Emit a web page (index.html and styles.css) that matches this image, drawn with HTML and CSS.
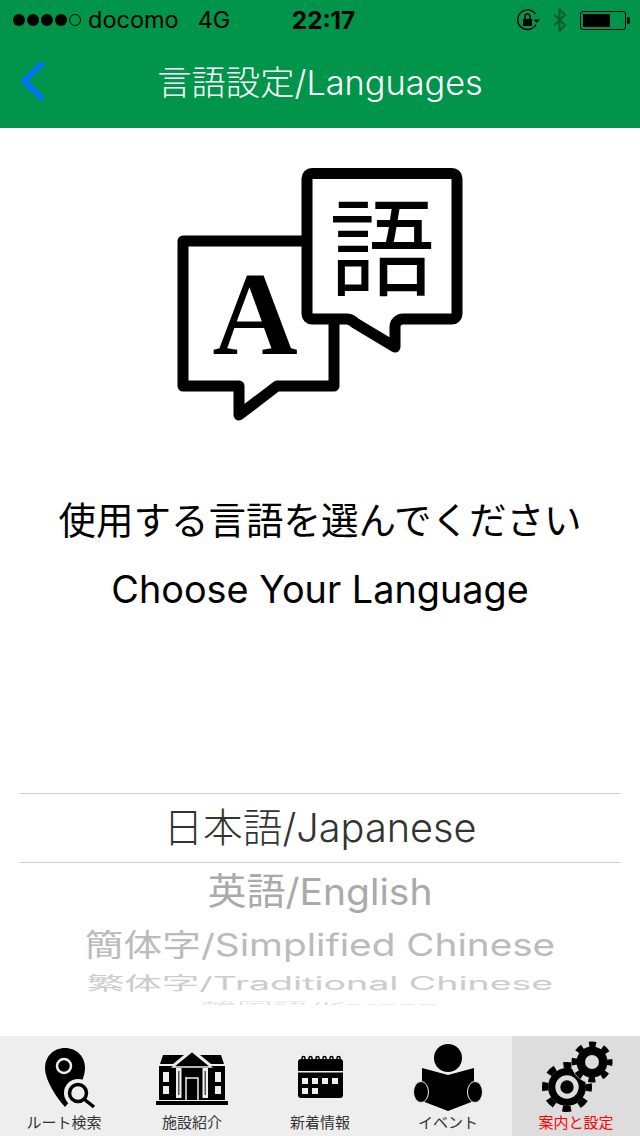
FILE: index.html
```html
<!DOCTYPE html>
<html lang="ja">
<head>
    <meta charset="UTF-8">
    <title>言語設定/Languages</title>
    <link rel="stylesheet" href="styles.css">
</head>
<body>
<div id="site">
    <header class="top">
        <div class="status">
            <div class="status-left">
                <span class="signal"><i></i><i></i><i></i><i></i><i class="off"></i></span>
                <span class="carrier">docomo</span>
                <span class="network">4G</span>
            </div>
            <div class="clock">22:17</div>
            <div class="status-right">
                <svg class="lock" width="24" height="24" viewBox="0 0 24 24">
                    <path d="M19 16.500A9.800 9.800 0 1 1 18.500 6" fill="none" stroke="#000" stroke-width="1.400"/>
                    <path d="M16.500 11.500h6.500l-3.200 3.500z" fill="#000"/>
                    <rect x="6" y="11" width="9" height="7" fill="#000"/>
                    <path d="M8 11V8.500a2.500 2.500 0 0 1 5 0V11" fill="none" stroke="#000" stroke-width="1.500"/>
                </svg>
                <svg class="bt" width="16" height="24" viewBox="0 0 16 24">
                    <path d="M2 6.500l11 10.500-5.500 6V1l5.500 6L2 17.500" fill="none" stroke="#0b5c32" stroke-width="2.200"/>
                </svg>
                <div class="battery"><div class="battery-fill"></div></div>
            </div>
        </div>
        <div class="nav">
            <svg class="back" width="28" height="42" viewBox="0 0 28 42">
                <path d="M24 3L5 21l19 18" fill="none" stroke="#0073ff" stroke-width="5.500"/>
            </svg>
            <h1 class="title">言語設定/Languages</h1>
        </div>
    </header>

    <main class="content">
        <svg class="lang-icon" width="286" height="254" viewBox="0 0 286 254">
            <path d="M130 73H6V218H62V247L100 218H157V150" fill="#fff" stroke="#000" stroke-width="11" stroke-linejoin="round"/>
            <path d="M135 5.500H275a5 5 0 0 1 5 5V146a5 5 0 0 1-5 5H226a8 8 0 0 0-8 8V179L178 155a12 12 0 0 0-8-4H135a5 5 0 0 1-5-5V10.500a5 5 0 0 1 5-5z" fill="#fff" stroke="#000" stroke-width="11" stroke-linejoin="round"/>
            <text class="icon-a" x="78" y="186" text-anchor="middle">A</text>
            <text class="icon-go" x="205" y="119" text-anchor="middle">語</text>
        </svg>
        <p class="prompt">使用する言語を選んでください</p>
        <p class="prompt en">Choose Your Language</p>
    </main>

    <section class="picker">
        <div class="row selected">日本語/Japanese</div>
        <div class="row r1">英語/English</div>
        <div class="row r2">簡体字/Simplified Chinese</div>
        <div class="row r3">繁体字/Traditional Chinese</div>
        <div class="row r4">韓国語/Korean</div>
    </section>

    <nav class="tabs">
        <div class="tab">
            <svg width="70" height="70" viewBox="0 0 70 70">
                <path d="M36 6C24 6 16 15 16 26c0 12 11 29 20 39 9-10 20-27 20-39C56 15 48 6 36 6z" fill="#000"/>
                <circle cx="35" cy="24" r="7" fill="#000" stroke="#eee" stroke-width="2.500"/>
                <circle cx="49" cy="51" r="14" fill="#eee"/>
                <circle cx="49" cy="51" r="8.500" fill="none" stroke="#000" stroke-width="3.500"/>
                <path d="M55.500 57.500L65 65" stroke="#000" stroke-width="3.500"/>
            </svg>
            <span>ルート検索</span>
        </div>
        <div class="tab">
            <svg class="building" width="72" height="60" viewBox="0 0 72 60">
                <path d="M4 18L7 9H28L17 18z M68 18L65 9H44L55 18z" fill="#000"/>
                <path d="M3 20H69V54H3z" fill="#000"/>
                <path d="M36 5.500L55 21H17z" fill="#000" stroke="#eee" stroke-width="1.500"/>
                <path d="M20 22h5.500v30H20z M46.500 22H52v30h-5.500z" fill="#eee"/>
                <path d="M22 25h1.500v24H22z M48.500 25H50v24h-1.500z" fill="#555"/>
                <path d="M30 32H42V54" fill="none" stroke="#eee" stroke-width="1.500"/>
                <path d="M30 31v23" stroke="#eee" stroke-width="1.500"/>
                <path d="M7 26h6v10H7z M7 40h6v8H7z M59 26h6v10h-6z M59 40h6v8h-6z" fill="#eee"/>
                <path d="M0 55H72V59H0z" fill="#000"/>
            </svg>
            <span>施設紹介</span>
        </div>
        <div class="tab">
            <svg width="48" height="60" viewBox="0 0 48 60">
                <path d="M2 20V29H47V20a3 3 0 0 0-3-3H5a3 3 0 0 0-3 3z" fill="#000"/>
                <path d="M2 30.500H47V53a3 3 0 0 1-3 3H5a3 3 0 0 1-3-3z" fill="#000"/>
                <path d="M6 20v-4a1.500 1.500 0 0 1 3 0v4 M13 20v-4a1.500 1.500 0 0 1 3 0v4 M20 20v-4a1.500 1.500 0 0 1 3 0v4 M27 20v-4a1.500 1.500 0 0 1 3 0v4 M34 20v-4a1.500 1.500 0 0 1 3 0v4 M41 20v-4a1.500 1.500 0 0 1 3 0v4" fill="none" stroke="#000" stroke-width="1.500"/>
                <path d="M6 36h6v6H6z M16 36h6v6h-6z M26 36h6v6h-6z M36 36h6v6h-6z M6 46h6v6H6z M16 46h6v6h-6z" fill="#eee"/>
            </svg>
            <span>新着情報</span>
        </div>
        <div class="tab">
            <svg width="70" height="70" viewBox="0 0 70 70">
                <circle cx="35" cy="16" r="14" fill="#000"/>
                <path d="M9 26L35 33 61 26V59L35 69 9 59z" fill="#000"/>
                <ellipse cx="8" cy="50" rx="7.500" ry="10.500" fill="#000" stroke="#eee" stroke-width="1"/>
                <ellipse cx="62" cy="50" rx="7.500" ry="10.500" fill="#000" stroke="#eee" stroke-width="1"/>
            </svg>
            <span>イベント</span>
        </div>
        <div class="tab active">
            <svg width="76" height="78" viewBox="0 0 76 78">
                <circle cx="29" cy="49" r="19" fill="#000"/>
                <circle cx="29" cy="49" r="22" fill="none" stroke="#000" stroke-width="6" stroke-dasharray="8.640 8.640" stroke-dashoffset="4.320"/>
                <circle cx="29" cy="49" r="9.200" fill="#000" stroke="#ddd" stroke-width="5"/>
                <circle cx="54" cy="24" r="21" fill="#ddd"/>
                <circle cx="54" cy="24" r="15.500" fill="#000"/>
                <circle cx="54" cy="24" r="17.750" fill="none" stroke="#000" stroke-width="5.500" stroke-dasharray="6.970 6.970" stroke-dashoffset="3.480"/>
                <circle cx="54" cy="24" r="7" fill="#ddd"/>
            </svg>
            <span>案内と設定</span>
        </div>
    </nav>
</div>
</body>
</html>
```

FILE: styles.css
```css
body, html, #site {
    margin: 0;
    padding: 0;
    height: 100%;
    overflow: hidden;
}

#site {
    display: flex;
    flex-direction: column;
    background: #fff;
    font-family: Inter, "Noto Sans CJK JP", sans-serif;
    color: #000;
}

.top {
    height: 128px;
    background: #00954a;
    flex: none;
}

.status {
    height: 40px;
    padding: 0 14px 0 13px;
    display: grid;
    grid-template-columns: 1fr auto 1fr;
    align-items: center;
    font-size: 23.500px;
    line-height: 40px;
}

.status-left {
    display: flex;
    align-items: center;
}

.signal {
    display: flex;
    gap: 2px;
    margin-right: 7px;
}

.signal i {
    width: 12px;
    height: 12px;
    border-radius: 50%;
    background: #000;
}

.signal i.off {
    background: none;
    border: 1px solid #000;
    box-sizing: border-box;
}

.network {
    margin-left: 19px;
}

.clock {
    font-weight: 700;
    font-size: 24.300px;
    padding-left: 8px;
}

.status-right {
    display: flex;
    justify-content: flex-end;
    align-items: center;
}

.lock {
    margin-right: 11px;
}

.bt {
    margin-right: 12px;
}

.battery {
    width: 46px;
    height: 19px;
    border: 1px solid #000;
    border-radius: 3px;
    padding: 2px;
    box-sizing: border-box;
    position: relative;
}

.battery:after {
    content: "";
    position: absolute;
    right: -5px;
    top: 5px;
    width: 3px;
    height: 7px;
    background: #000;
    border-radius: 0 2px 2px 0;
}

.battery-fill {
    width: 68%;
    height: 100%;
    background: #000;
}

.nav {
    height: 88px;
    position: relative;
    display: flex;
    align-items: center;
    justify-content: center;
}

.back {
    position: absolute;
    left: 19px;
    top: 20px;
}

.title {
    margin: 0;
    color: #fff;
    font-size: 34.300px;
    font-weight: 300;
    position: relative;
    top: -4px;
}

.content {
    flex: 1;
    display: flex;
    flex-direction: column;
    align-items: center;
    padding-top: 40px;
    min-height: 0;
}

.lang-icon {
    display: block;
    margin-bottom: 75px;
}

.prompt {
    margin: 0 0 20px;
    font-size: 37.500px;
    line-height: 48px;
}

.prompt.en {
    font-size: 37.800px;
}

.icon-a {
    font-family: "Liberation Serif", serif;
    font-weight: 700;
    font-size: 118px;
}

.icon-go {
    font-family: "Noto Sans CJK JP", sans-serif;
    font-size: 106px;
    font-weight: 400;
}

.picker {
    flex: none;
    height: 212px;
    margin: 0 20px 31px;
    border-top: 1px solid #ccc;
    overflow: hidden;
    text-align: center;
    box-sizing: border-box;
}

.row {
    white-space: nowrap;
    font-weight: 300;
}

.selected {
    height: 68px;
    line-height: 68px;
    font-size: 39.700px;
    color: #333;
    border-bottom: 1px solid #ccc;
}

.r1 {
    height: 58px;
    line-height: 58px;
    font-size: 39px;
    font-weight: 400;
    color: #aaa;
    transform: scaleY(.95);
}

.r2 {
    height: 48px;
    line-height: 48px;
    font-size: 36px;
    font-weight: 400;
    color: #bbb;
    transform: scale(1.075, .85);
}

.r3 {
    height: 28px;
    line-height: 28px;
    font-size: 30px;
    font-weight: 400;
    color: #ccc;
    transform: scale(1.25, .6);
}

.r4 {
    height: 10px;
    line-height: 10px;
    font-size: 30px;
    color: #ddd;
    transform: translateY(4px) scale(1.2, .3);
}

.tabs {
    flex: none;
    height: 100px;
    background: #eee;
    display: grid;
    grid-template-columns: repeat(5, 1fr);
}

.tab {
    display: flex;
    flex-direction: column;
    align-items: center;
    position: relative;
    overflow: hidden;
}

.tab svg {
    display: block;
    position: absolute;
    top: 6px;
}

.tab .building {
    top: 10px;
}

.tab span {
    position: absolute;
    bottom: 3px;
    font-size: 15px;
    line-height: 20px;
    color: #333;
    white-space: nowrap;
}

.tab.active {
    background: #ddd;
}

.tab.active svg {
    top: 2px;
}

.tab.active span {
    color: #f00;
}
```
